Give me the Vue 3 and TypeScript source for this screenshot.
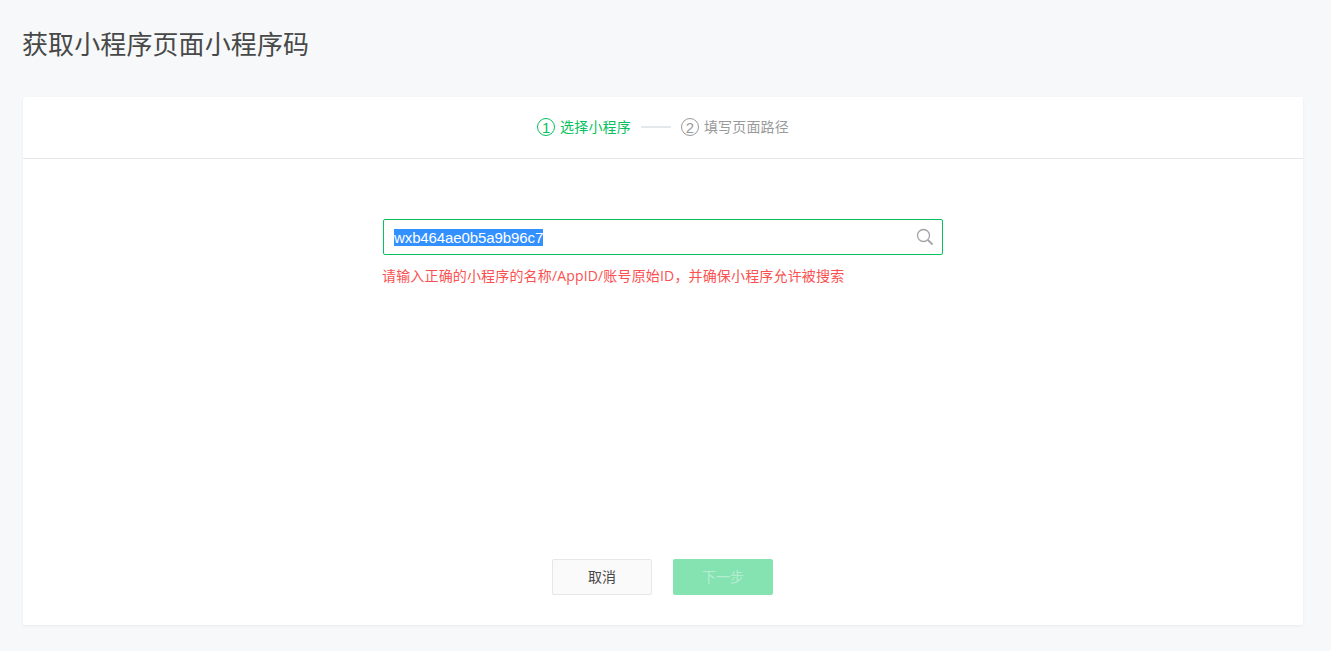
<script setup lang="ts">
const steps = [
  { label: '选择小程序', active: true },
  { label: '填写页面路径', active: false },
]
const appId = 'wxb464ae0b5a9b96c7'
</script>

<template>
  <div class="page">
    <h1 class="title">获取小程序页面小程序码</h1>
    <div class="card">
      <div class="steps">
        <template v-for="(step, i) in steps" :key="step.label">
          <div v-if="i > 0" class="step-line"></div>
          <div class="step" :class="{ active: step.active }">
            <span class="step-no">{{ i + 1 }}</span>
            <span class="step-label">{{ step.label }}</span>
          </div>
        </template>
      </div>
      <div class="body">
        <div class="form">
          <div class="search">
            <span class="selected">{{ appId }}</span>
            <svg class="search-icon" width="18" height="18" viewBox="0 0 18 18" fill="none">
              <circle cx="7.5" cy="7.5" r="6" stroke="#a3a3a3" stroke-width="1.3" />
              <path d="M12 12l4.6 4.6" stroke="#a3a3a3" stroke-width="1.8" />
            </svg>
          </div>
          <p class="error">请输入正确的小程序的名称/AppID/账号原始ID，并确保小程序允许被搜索</p>
        </div>
      </div>
      <div class="footer">
        <button class="btn">取消</button>
        <button class="btn primary" disabled>下一步</button>
      </div>
    </div>
  </div>
</template>

<style scoped>
.page {
  height: 651px;
  box-sizing: border-box;
  padding: 0 28px 0 23px;
  background: #f6f8f9;
  font-family: "Noto Sans CJK SC", "Liberation Sans", sans-serif;
  overflow: hidden;
}

.title {
  margin: 0 0 0 -1px;
  height: 97px;
  padding-top: 23px;
  box-sizing: border-box;
  font-size: 26px;
  line-height: 40px;
  font-weight: 400;
  letter-spacing: 0.1px;
  color: #484848;
}

.card {
  height: 528px;
  background: #fff;
  border-radius: 2px;
  box-shadow: 0 1px 3px rgba(0, 0, 0, 0.06);
  display: flex;
  flex-direction: column;
}

.steps {
  height: 62px;
  box-sizing: border-box;
  border-bottom: 1px solid #e7e7eb;
  padding-bottom: 1px;
  display: flex;
  justify-content: center;
  align-items: center;
  gap: 10px;
  font-size: 14px;
  color: #9a9a9a;
}

.step {
  display: flex;
  align-items: center;
  gap: 5px;
}

.step.active {
  color: #07c160;
}

.step-label {
  line-height: 18px;
  margin-top: -3px;
  letter-spacing: 0.17px;
}

.step-no {
  width: 16px;
  height: 16px;
  border: 1px solid currentColor;
  border-radius: 50%;
  display: flex;
  justify-content: center;
  align-items: center;
  font-family: "Liberation Sans", sans-serif;
  font-size: 15px;
}

.step-line {
  width: 30px;
  height: 2px;
  background: #e4e8eb;
}

.body {
  flex: 1;
  padding-top: 60px;
  display: flex;
  justify-content: center;
}

.form {
  width: 560px;
}

.search {
  height: 36px;
  box-sizing: border-box;
  border: 1px solid #07c160;
  border-radius: 2px;
  padding: 0 8px 0 10px;
  display: flex;
  align-items: center;
  justify-content: space-between;
  font-family: "Liberation Sans", sans-serif;
  font-size: 15px;
}

.selected {
  background: #3390ff;
  color: #fff;
  line-height: 17px;
  letter-spacing: -0.1px;
}

.search-icon {
  flex: none;
}

.error {
  margin: 11px 0 0 -1px;
  font-family: "Open Sans", "Noto Sans CJK SC", sans-serif;
  font-size: 14px;
  line-height: 20px;
  letter-spacing: 0.16px;
  color: #fa5151;
}

.footer {
  height: 66px;
  padding-right: 1px;
  display: flex;
  justify-content: center;
  gap: 21px;
}

.btn {
  width: 100px;
  height: 36px;
  padding: 0 0 2px;
  box-sizing: border-box;
  border: 1px solid #e7e7e7;
  border-radius: 2px;
  background: #fafafa;
  color: #484848;
  font-family: inherit;
  font-size: 14px;
}

.btn.primary {
  border-color: #85e2b1;
  background: #85e2b1;
  color: #b5edd0;
}
</style>
